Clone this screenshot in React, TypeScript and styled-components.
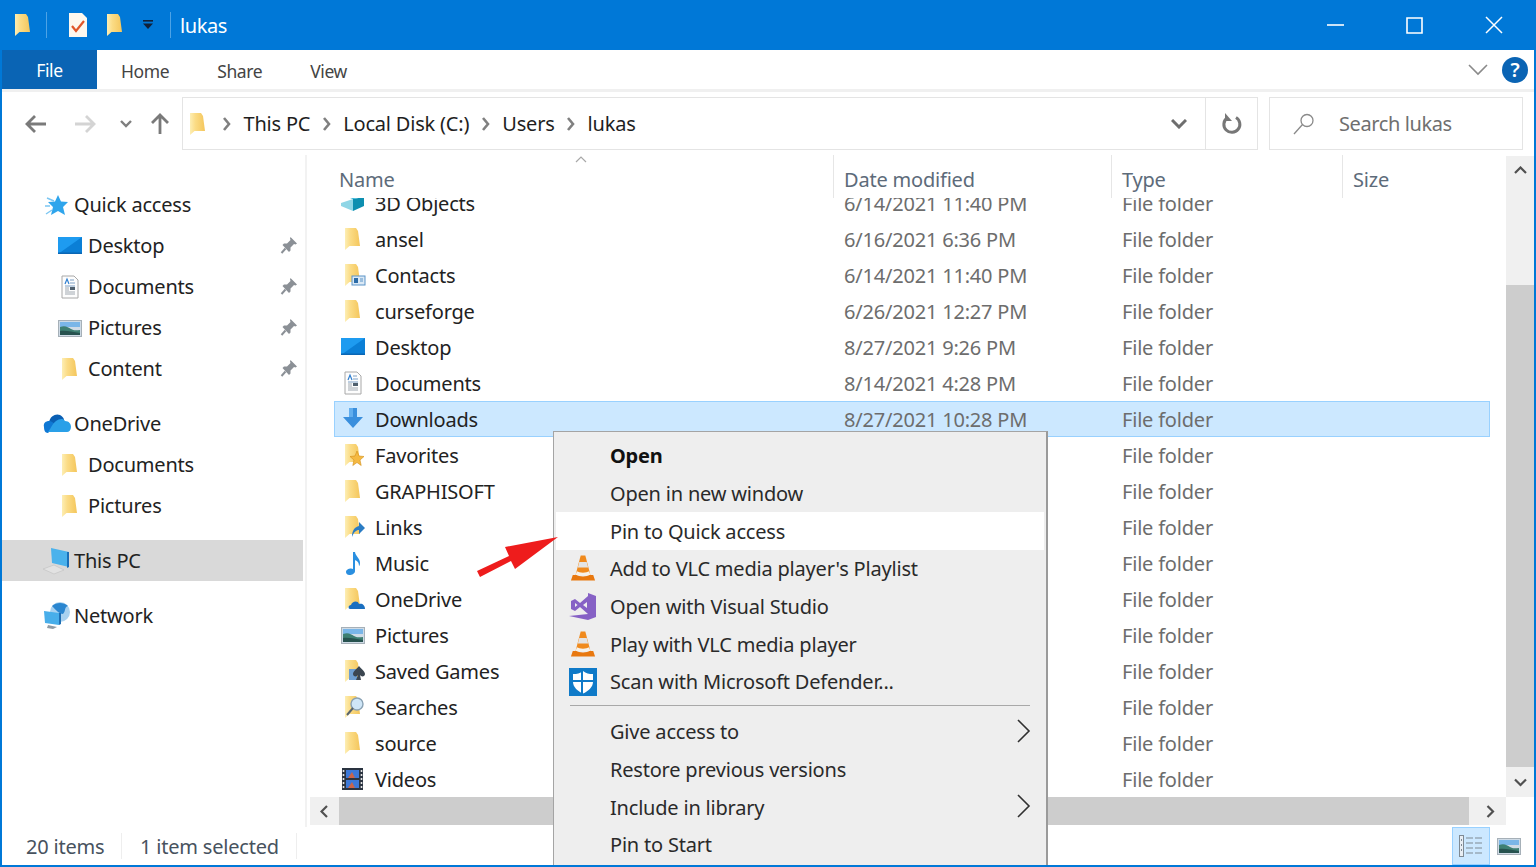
import React from "react";
import styled, { createGlobalStyle } from "styled-components";

const GlobalStyle = createGlobalStyle`
  html, body {
    margin: 0;
    padding: 0;
    overflow: hidden;
    background: #fff;
  }
  * { box-sizing: border-box; }
  svg { flex: none; }
`;

const FONT = `"Noto Sans", "Open Sans", sans-serif`;

/* ---------- icons ---------- */

const FolderIcon = ({ children }: { children?: React.ReactNode }) => (
  <svg width="26" height="24" viewBox="0 0 26 24">
    <defs>
      <linearGradient id="folderFill" x1="0" y1="0" x2="1" y2="0">
        <stop offset="0" stopColor="#fdeeb4" />
        <stop offset="0.35" stopColor="#fbdc86" />
        <stop offset="1" stopColor="#f4c65c" />
      </linearGradient>
    </defs>
    <path d="M5 1H16L18 4L20 19H9.5L5 23Z" fill="url(#folderFill)" />
    {children}
  </svg>
);

const DesktopIcon = () => (
  <svg width="26" height="24" viewBox="0 0 26 24">
    <rect x="1" y="3" width="24" height="17" fill="#1e9bf0" />
    <path d="M1 20L25 3V20Z" fill="#0b7fd6" />
    <rect x="1" y="18.5" width="24" height="1.5" fill="#0a66b4" />
  </svg>
);

const DocumentsIcon = () => (
  <svg width="26" height="24" viewBox="0 0 26 24">
    <path d="M5 1H17L21 5V23H5Z" fill="#fdfdfd" stroke="#a8a8a8" />
    <path d="M8 9l2-5 2 5" fill="none" stroke="#2f7fd0" strokeWidth="1.2" />
    <path d="M13 5h4M13 8h5M8 11h10" stroke="#7d9fc4" strokeWidth="1" />
    <rect x="13" y="12" width="5" height="3" fill="#50606e" />
    <path d="M8 13h4M8 15h4M8 17h10M8 19h10" stroke="#a0a8b0" strokeWidth="1" />
  </svg>
);

const PicturesIcon = () => (
  <svg width="26" height="24" viewBox="0 0 26 24">
    <rect x="1.5" y="4.5" width="23" height="16" fill="#cfdbe6" stroke="#a6b0b8" />
    <rect x="3" y="6" width="20" height="5" fill="#7ab6e8" />
    <path d="M3 11C8 9 11 11 14 13S20 14 23 14V19H3Z" fill="#3e7f72" />
    <path d="M3 15C9 14 15 16 23 17V19H3Z" fill="#27524f" />
  </svg>
);

const DownloadsIcon = () => (
  <svg width="26" height="24" viewBox="0 0 26 24">
    <path d="M9 1H17V10H23L13 21L3 10H9Z" fill="#3a8fdd" />
    <rect x="9" y="1" width="4" height="9" fill="#62aeee" />
  </svg>
);

const MusicIcon = () => (
  <svg width="26" height="24" viewBox="0 0 26 24">
    <path d="M13 1H15C15.5 5 20 7 20 12C20 13.5 19.5 15 19 15C19 11 17 10 15 9V20C15 22.5 12 24 9.5 24C7 24 6 22.5 6 21C6 19 8.5 17.5 11 17.5C11.8 17.5 12.5 17.7 13 18Z" fill="#2a8fe0" />
  </svg>
);

const VideosIcon = () => (
  <svg width="26" height="24" viewBox="0 0 26 24">
    <rect x="2" y="1" width="21" height="22" fill="#2a3340" />
    <rect x="6" y="3" width="13" height="8" fill="#3c78d8" />
    <rect x="6" y="13" width="13" height="8" fill="#3c78d8" />
    <path d="M8 11l4-6 3 6M8 21l4-6 3 6" fill="#c9654a" />
    <path d="M3.5 3v18M21.5 3v18" stroke="#e4e4e4" strokeWidth="1.6" strokeDasharray="2 2" />
  </svg>
);

const ObjectsIcon = () => (
  <svg width="26" height="24" viewBox="0 0 26 24">
    <path d="M1 12L13 8V20L1 15Z" fill="#8fd6e6" />
    <path d="M13 8L24 6V15L13 20Z" fill="#0d8fb0" />
    <path d="M4 0H24V6L13 8L4 5Z" fill="#2db2d8" />
  </svg>
);

const ContactsBadge = () => (
  <g>
    <rect x="12" y="13" width="13" height="9" fill="#dbe9f5" stroke="#5b93c7" />
    <rect x="14" y="15" width="4" height="5" fill="#2c6ca8" />
    <path d="M20 16h3M20 18h3" stroke="#5b93c7" />
  </g>
);
const FavoritesBadge = () => (
  <path d="M17 8l2 5 5 .5-4 3.5 1.2 5.5-4.2-3-4.2 3 1.2-5.5-4-3.5 5-.5Z" fill="#f5b942" stroke="#d18f1a" strokeWidth=".6" />
);
const LinksBadge = () => (
  <path d="M12 22C12 15 15 12 19 11V7L25 13L19 19V15C16 15 14 17 12 22Z" fill="#2a7cc4" />
);
const OneDriveBadge = () => (
  <path d="M10 22C8 22 8 18 11 18C12 14 18 13 19 17C22 16 25 18 25 22Z" fill="#1a6fc0" />
);
const GamesBadge = () => (
  <g>
    <rect x="9" y="10" width="8" height="11" fill="#6f9fd0" />
    <path d="M19 7C21 10 25 12 25 15S21 18 20 16L21 21H16L18 16C17 18 13 18 13 15S17 10 19 7Z" fill="#3b4650" />
  </g>
);
const SearchesBadge = () => (
  <g>
    <circle cx="17" cy="9" r="6" fill="#cfe6f7" stroke="#8aa2b4" strokeWidth="1.4" />
    <path d="M13 13L7 20" stroke="#59646c" strokeWidth="2" />
  </g>
);

const PinIcon = () => (
  <svg width="18" height="18" viewBox="0 0 18 18">
    <path d="M10.5 1L17 7.5L15.5 8.5L14 8L10.5 11.5L10.5 14.5L9 16L2.5 9L4 7.5H7L10.5 4L10 2.5Z" fill="#8b9096" />
    <path d="M5.5 12.5L1.5 17" stroke="#8b9096" strokeWidth="2" />
  </svg>
);

const StarIcon = () => (
  <svg width="26" height="26" viewBox="0 0 26 26">
    <path d="M14 3L17 9.5L24 10L19 15L21 23L14 19L7 23L9 15L4 10L11 9.5Z" fill="#2fa5ec" />
    <path d="M3 6L10 9M1 14L6 14M2 22L8 18" stroke="#7cc6f2" strokeWidth="1.4" />
  </svg>
);

const CloudIcon = () => (
  <svg width="30" height="22" viewBox="0 0 30 22">
    <path d="M7 9C8 3 14 0 18 2C20 3 22 5 22 7L7 14Z" fill="#0a5fb4" />
    <path d="M2 14C1 10 4 8 7 8C9 8 12 10 14 12L6 20C3 20 2 17 2 14Z" fill="#0f78d4" />
    <path d="M14 8C17 6 21 5 23 8C27 8 29 11 29 14C29 17 27 19 25 19H6C9 15 11 10 14 8Z" fill="#2aa0e8" />
  </svg>
);

const ThisPcIcon = () => (
  <svg width="30" height="28" viewBox="0 0 30 28">
    <path d="M9 1L27 5V20L10 16Z" fill="#4ab2ec" />
    <path d="M25 5L27 5V20L25 21Z" fill="#1a6fb8" />
    <path d="M1 22L12 18L22 23L12 27Z" fill="#e2e2e2" stroke="#bfbfbf" strokeWidth=".6" />
  </svg>
);

const NetworkIcon = () => (
  <svg width="28" height="28" viewBox="0 0 28 28">
    <circle cx="17" cy="10" r="10" fill="#a9d2f0" />
    <path d="M9 4C13 0 21 0 25 4C21 5 23 9 20 12C16 12 13 8 9 4Z" fill="#2a86d0" />
    <path d="M1 9L16 11V23L2 21Z" fill="#48aeea" />
    <path d="M16 11L18 11V22L16 23Z" fill="#1f6fb4" />
    <path d="M5 23L14 25L10 27L4 26Z" fill="#8f9ba5" />
  </svg>
);

const VlcIcon = () => (
  <svg width="26" height="29" viewBox="0 0 28 30">
    <path d="M11.5 1H16.5L22 22H6Z" fill="#f08a1d" />
    <path d="M10 8H18L19.5 14H8.5Z" fill="#e4e4e4" />
    <path d="M7.5 18C10 20 18 20 20.5 18L22 22H6Z" fill="#f7f2ea" />
    <path d="M3 22H7C9 24 19 24 21 22H25L27 28H1Z" fill="#e8780f" />
  </svg>
);

const VsIcon = () => (
  <svg width="30" height="30" viewBox="0 0 30 30">
    <path d="M20 1L28 4V25L20 28L1 24L20 22Z" fill="#8661c5" />
    <path d="M3 9L7 7L12 11L20 4V22L12 15L7 19L3 17ZM7 11V15L9.5 13ZM15 13L19 16V10Z" fill="#8661c5" fillRule="evenodd" />
  </svg>
);

const DefenderIcon = () => (
  <svg width="28" height="28" viewBox="0 0 28 28">
    <rect width="28" height="28" fill="#0f7ac8" />
    <path d="M14 3C17 5.5 20 6 24 6V14C24 19 19 23.5 14 25.5C9 23.5 4 19 4 14V6C8 6 11 5.5 14 3Z" fill="#fff" />
    <path d="M13 3V26M3 13H25" stroke="#0f7ac8" strokeWidth="2" />
  </svg>
);

type ChevronProps = {
  d: string;
  w: number;
  h: number;
  color?: string;
  stroke?: number;
};

const Line = ({ d, w, h, color = "#7a7a7a", stroke = 2 }: ChevronProps) => (
  <svg width={w} height={h} viewBox={`0 0 ${w} ${h}`}>
    <path d={d} fill="none" stroke={color} strokeWidth={stroke} />
  </svg>
);

const Crumb = () => <Line d="M2 2L7 8L2 14" w={10} h={16} color="#808080" stroke={2.6} />;
const SubmenuArrow = () => <Line d="M2 1L13 12L2 23" w={15} h={24} color="#303030" stroke={1.6} />;

const DetailsIcon = () => (
  <svg width="26" height="24" viewBox="0 0 26 24">
    <rect x="1.5" y="1.5" width="4" height="21" fill="#e8eef4" stroke="#7f8a94" />
    <path d="M3.5 5v2M3.5 10v2M3.5 15v2" stroke="#7f8a94" />
    <path d="M8 4h7M17 4h7M8 9h7M17 9h7M8 14h7M17 14h7M8 19h7M17 19h7" stroke="#7f8a94" strokeWidth="1.2" />
  </svg>
);

/* ---------- data ---------- */

type FileRow = { name: string; date?: string; icon: React.ReactNode };

const files: FileRow[] = [
  { name: "3D Objects", date: "6/14/2021 11:40 PM", icon: <ObjectsIcon /> },
  { name: "ansel", date: "6/16/2021 6:36 PM", icon: <FolderIcon /> },
  { name: "Contacts", date: "6/14/2021 11:40 PM", icon: <FolderIcon><ContactsBadge /></FolderIcon> },
  { name: "curseforge", date: "6/26/2021 12:27 PM", icon: <FolderIcon /> },
  { name: "Desktop", date: "8/27/2021 9:26 PM", icon: <DesktopIcon /> },
  { name: "Documents", date: "8/14/2021 4:28 PM", icon: <DocumentsIcon /> },
  { name: "Downloads", date: "8/27/2021 10:28 PM", icon: <DownloadsIcon /> },
  { name: "Favorites", icon: <FolderIcon><FavoritesBadge /></FolderIcon> },
  { name: "GRAPHISOFT", icon: <FolderIcon /> },
  { name: "Links", icon: <FolderIcon><LinksBadge /></FolderIcon> },
  { name: "Music", icon: <MusicIcon /> },
  { name: "OneDrive", icon: <FolderIcon><OneDriveBadge /></FolderIcon> },
  { name: "Pictures", icon: <PicturesIcon /> },
  { name: "Saved Games", icon: <FolderIcon><GamesBadge /></FolderIcon> },
  { name: "Searches", icon: <FolderIcon><SearchesBadge /></FolderIcon> },
  { name: "source", icon: <FolderIcon /> },
  { name: "Videos", icon: <VideosIcon /> },
];

type NavEntry = { label: string; icon: React.ReactNode; pinned?: boolean; child?: boolean; active?: boolean };

const navGroups: NavEntry[][] = [
  [
    { label: "Quick access", icon: <StarIcon /> },
    { label: "Desktop", icon: <DesktopIcon />, pinned: true, child: true },
    { label: "Documents", icon: <DocumentsIcon />, pinned: true, child: true },
    { label: "Pictures", icon: <PicturesIcon />, pinned: true, child: true },
    { label: "Content", icon: <FolderIcon />, pinned: true, child: true },
  ],
  [
    { label: "OneDrive", icon: <CloudIcon /> },
    { label: "Documents", icon: <FolderIcon />, child: true },
    { label: "Pictures", icon: <FolderIcon />, child: true },
  ],
  [{ label: "This PC", icon: <ThisPcIcon />, active: true }],
  [{ label: "Network", icon: <NetworkIcon /> }],
];

type MenuEntry = { label: string; icon?: React.ReactNode; bold?: boolean; hot?: boolean; sub?: boolean; split?: boolean };

const menuItems: MenuEntry[] = [
  { label: "Open", bold: true },
  { label: "Open in new window" },
  { label: "Pin to Quick access", hot: true },
  { label: "Add to VLC media player's Playlist", icon: <VlcIcon /> },
  { label: "Open with Visual Studio", icon: <VsIcon /> },
  { label: "Play with VLC media player", icon: <VlcIcon /> },
  { label: "Scan with Microsoft Defender...", icon: <DefenderIcon /> },
  { label: "Give access to", sub: true, split: true },
  { label: "Restore previous versions" },
  { label: "Include in library", sub: true },
  { label: "Pin to Start" },
];

const crumbs = ["This PC", "Local Disk (C:)", "Users", "lukas"];

/* ---------- page ---------- */

export default function App() {
  return (
    <Window>
      <GlobalStyle />
      <TitleBar>
        <QuickSlot $width={28}><FolderIcon /></QuickSlot>
        <TitleDivider $gap={9} />
        <QuickSlot $width={64}>
          <svg width="22" height="26" viewBox="0 0 22 26">
            <path d="M2 1H15L20 6V25H2Z" fill="#fdf8ef" />
            <path d="M5 14L9 19L17 9" fill="none" stroke="#e0562a" strokeWidth="2.2" />
          </svg>
        </QuickSlot>
        <QuickSlot $width={10}><FolderIcon /></QuickSlot>
        <QuickSlot $width={55}>
          <svg width="12" height="10" viewBox="0 0 12 10">
            <rect x="1" y="0" width="10" height="1.6" fill="#10213a" />
            <path d="M1 3.5H11L6 9Z" fill="#10213a" />
          </svg>
        </QuickSlot>
        <TitleDivider $gap={-5} />
        <WindowTitle>lukas</WindowTitle>
        <WindowControls>
          <WindowButton>
            <Line d="M0 8H17" w={17} h={16} color="#fff" stroke={1.6} />
          </WindowButton>
          <WindowButton>
            <Line d="M1 1H16V16H1Z" w={17} h={17} color="#fff" stroke={1.6} />
          </WindowButton>
          <WindowButton>
            <Line d="M1 1L17 17M17 1L1 17" w={18} h={18} color="#fff" stroke={1.5} />
          </WindowButton>
        </WindowControls>
      </TitleBar>

      <Ribbon>
        <FileTab>File</FileTab>
        <RibbonTab>Home</RibbonTab>
        <RibbonTab>Share</RibbonTab>
        <RibbonTab>View</RibbonTab>
        <RibbonRight>
          <Line d="M1 1L10 10L19 1" w={20} h={12} color="#8a8a8a" stroke={1.6} />
          <HelpBadge>?</HelpBadge>
        </RibbonRight>
      </Ribbon>

      <AddressRow>
        <NavButton $width={49}>
          <Line d="M10 2L2 10L10 18M2 10H21" w={22} h={20} color="#7a7a7a" stroke={2.8} />
        </NavButton>
        <NavButton $width={49}>
          <Line d="M12 2L20 10L12 18M20 10H1" w={22} h={20} color="#d4d4d4" stroke={2.8} />
        </NavButton>
        <NavButton $width={33}>
          <Line d="M1 1L6 6L11 1" w={12} h={8} color="#7f7f7f" stroke={2.4} />
        </NavButton>
        <NavButton $width={36}>
          <Line d="M2 10L10 2L18 10M10 2V21" w={20} h={22} color="#7a7a7a" stroke={2.8} />
        </NavButton>
        <AddressBox>
          <AddressPath>
            <AddressFolder><FolderIcon /></AddressFolder>
            {crumbs.map((crumb) => (
              <React.Fragment key={crumb}>
                <Crumb />
                <span>{crumb}</span>
              </React.Fragment>
            ))}
          </AddressPath>
          <AddressAction $width={53}>
            <Line d="M1 1L8 8L15 1" w={16} h={10} color="#6e6e6e" stroke={3} />
          </AddressAction>
          <AddressAction $width={52} $divided>
            <svg width="20" height="22" viewBox="0 0 20 22">
              <path d="M14 4.5A8 8 0 1 1 5 5" fill="none" stroke="#777" strokeWidth="3" />
              <path d="M3 0V8H10Z" fill="#777" />
            </svg>
          </AddressAction>
        </AddressBox>
        <SearchBox>
          <svg width="24" height="24" viewBox="0 0 24 24">
            <circle cx="15" cy="8.5" r="6" fill="none" stroke="#8a8a8a" strokeWidth="1.3" />
            <path d="M10.5 12.5L2 22" stroke="#8a8a8a" strokeWidth="1.3" />
          </svg>
          <SearchText>Search lukas</SearchText>
        </SearchBox>
      </AddressRow>

      <Main>
        <Sidebar>
          {navGroups.map((group, i) => (
            <NavGroup key={i}>
              {group.map((entry) => (
                <NavRow key={entry.label} $active={entry.active}>
                  <NavIcon $child={entry.child}>{entry.icon}</NavIcon>
                  <NavLabel $child={entry.child}>{entry.label}</NavLabel>
                  {entry.pinned && <PinSlot><PinIcon /></PinSlot>}
                </NavRow>
              ))}
            </NavGroup>
          ))}
        </Sidebar>

        <FileArea>
          <ListPane>
            <SortCaret>
              <Line d="M1 6L6 1L11 6" w={12} h={7} color="#a8a8a8" stroke={1.2} />
            </SortCaret>
            <HeaderRow>
              <HeaderCell>Name</HeaderCell>
              <HeaderCell $divided>Date modified</HeaderCell>
              <HeaderCell $divided>Type</HeaderCell>
              <HeaderCell $divided>Size</HeaderCell>
            </HeaderRow>
            <RowViewport>
              <RowList>
                {files.map((file) => (
                  <Row key={file.name} $selected={file.name === "Downloads"}>
                    <NameCell>
                      <RowIcon>{file.icon}</RowIcon>
                      {file.name}
                    </NameCell>
                    <MetaCell>{file.date}</MetaCell>
                    <MetaCell>File folder</MetaCell>
                    <MetaCell />
                  </Row>
                ))}
              </RowList>
            </RowViewport>
          </ListPane>

          <VScroll>
            <ScrollArrow $size={28}>
              <Line d="M1 7L6.5 1.5L12 7" w={13} h={9} color="#505050" stroke={2.2} />
            </ScrollArrow>
            <VTrackGap />
            <VThumb />
            <ScrollArrow $size={30}>
              <Line d="M1 1.5L6.5 7L12 1.5" w={13} h={9} color="#505050" stroke={2.2} />
            </ScrollArrow>
          </VScroll>

          <HScroll>
            <ScrollArrow $size={29}>
              <Line d="M7 1L1.5 6.5L7 12" w={9} h={13} color="#505050" stroke={2.2} />
            </ScrollArrow>
            <HThumb />
            <ScrollArrow $size={37} $inset={5}>
              <Line d="M1.5 1L7 6.5L1.5 12" w={9} h={13} color="#505050" stroke={2.2} />
            </ScrollArrow>
          </HScroll>
        </FileArea>
      </Main>

      <StatusBar>
        <StatusItem>20 items</StatusItem>
        <StatusItem $wide>1 item selected</StatusItem>
        <ViewButtons>
          <ViewButton $on><DetailsIcon /></ViewButton>
          <ViewButton><PicturesIcon /></ViewButton>
        </ViewButtons>
      </StatusBar>

      <ContextMenu>
        {menuItems.map((item) => (
          <React.Fragment key={item.label}>
            {item.split && <MenuSplit />}
            <MenuItem $hot={item.hot} $bold={item.bold}>
              <MenuIcon>{item.icon}</MenuIcon>
              {item.label}
              {item.sub && <MenuArrow><SubmenuArrow /></MenuArrow>}
            </MenuItem>
          </React.Fragment>
        ))}
      </ContextMenu>

      <Pointer width="90" height="50" viewBox="0 0 90 50">
        <path d="M6 41L38 26L34 17L87 7L44 39L40 31L9 47Z" fill="#ee1c1c" />
      </Pointer>
    </Window>
  );
}

const Window = styled.div`
  position: relative;
  display: flex;
  flex-direction: column;
  width: 1536px;
  height: 867px;
  overflow: hidden;
  background: #fff;
  border: 2px solid #0078d7;
  border-top: 0;
  font-family: ${FONT};
  font-size: 20px;
  letter-spacing: -0.2px;
  color: #222;
`;

const TitleBar = styled.div`
  display: flex;
  align-items: center;
  flex: 0 0 50px;
  padding-left: 7px;
  background: #0078d7;
  color: #fff;
`;

const QuickSlot = styled.div<{ $width: number }>`
  display: flex;
  justify-content: center;
  align-items: center;
  width: ${({ $width }) => $width}px;
`;

const TitleDivider = styled.div<{ $gap: number }>`
  width: 1px;
  height: 26px;
  margin: 0 -1px 0 ${({ $gap }) => $gap}px;
  background: #4da3e6;
`;

const WindowTitle = styled.div`
  margin-left: 10px;
  font-size: 20px;
  letter-spacing: -0.4px;
`;

const WindowControls = styled.div`
  display: flex;
  margin-left: auto;
  margin-right: 1px;
`;

const WindowButton = styled.div`
  display: flex;
  justify-content: center;
  align-items: center;
  width: 79px;
  height: 50px;
`;

const Ribbon = styled.div`
  display: flex;
  align-items: center;
  flex: 0 0 42px;
  border-bottom: 3px solid #f0f0f0;
  font-size: 17.5px;
  letter-spacing: -0.4px;
  color: #444;
`;

const FileTab = styled.div`
  display: flex;
  justify-content: center;
  align-items: center;
  align-self: stretch;
  width: 95px;
  background: #0a64b4;
  color: #fff;
`;

const RibbonTab = styled.div`
  padding: 2px 24px 0;
`;

const RibbonRight = styled.div`
  display: flex;
  align-items: center;
  gap: 14px;
  margin-left: auto;
  padding-right: 6px;
`;

const HelpBadge = styled.div`
  display: flex;
  justify-content: center;
  align-items: center;
  width: 26px;
  height: 26px;
  border-radius: 50%;
  background: #0a64b4;
  color: #fff;
  font-size: 20px;
  font-weight: 600;
`;

const AddressRow = styled.div`
  display: flex;
  flex: 0 0 63px;
  padding: 5px 11px 5px 9px;
`;

const NavButton = styled.div<{ $width: number }>`
  display: flex;
  justify-content: center;
  align-items: center;
  width: ${({ $width }) => $width}px;
`;

const AddressBox = styled.div`
  display: flex;
  flex: 1;
  margin-left: 4px;
  border: 1px solid #e4e4e4;
  background: #fff;
`;

const AddressPath = styled.div`
  display: flex;
  flex: 1;
  align-items: center;
  gap: 11.5px;
  padding-left: 2px;
  font-size: 20px;
  color: #1e1e1e;
`;

const AddressFolder = styled.div`
  display: flex;
  margin-right: -0.5px;
`;

const AddressAction = styled.div<{ $width: number; $divided?: boolean }>`
  display: flex;
  justify-content: center;
  align-items: center;
  width: ${({ $width }) => $width}px;
  border-left: ${({ $divided }) => ($divided ? "1px solid #e4e4e4" : "0")};
`;

const SearchBox = styled.div`
  display: flex;
  align-items: center;
  gap: 23px;
  width: 254px;
  margin-left: 11px;
  padding-left: 22px;
  border: 1px solid #e4e4e4;
  letter-spacing: -0.4px;
`;

const SearchText = styled.span`
  color: #6f6f6f;
`;

const Main = styled.div`
  display: flex;
  flex: 1;
  min-height: 0;
`;

const Sidebar = styled.nav`
  display: flex;
  flex-direction: column;
  gap: 14px;
  width: 305px;
  padding: 29px 2px 0 0;
  border-right: 2px solid #f2f2f2;
`;

const NavGroup = styled.div`
  display: flex;
  flex-direction: column;
`;

const NavRow = styled.div<{ $active?: boolean }>`
  display: flex;
  align-items: center;
  height: 41px;
  background: ${({ $active }) => ($active ? "#d9d9d9" : "transparent")};
`;

const NavIcon = styled.div<{ $child?: boolean }>`
  display: flex;
  justify-content: center;
  width: 30px;
  margin-left: ${({ $child }) => ($child ? 53 : 40)}px;
`;

const NavLabel = styled.span<{ $child?: boolean }>`
  margin-left: ${({ $child }) => ($child ? 3 : 2)}px;
`;

const PinSlot = styled.div`
  display: flex;
  margin: 0 5px 2px auto;
`;

const FileArea = styled.div`
  display: grid;
  flex: 1;
  grid-template-columns: 1fr 28px;
  grid-template-rows: 642px 28px;
  min-width: 0;
`;

const ListPane = styled.div`
  position: relative;
  display: flex;
  flex-direction: column;
  min-height: 0;
`;

const SortCaret = styled.div`
  position: absolute;
  top: 1px;
  left: 268px;
  display: flex;
`;

const HeaderRow = styled.div`
  display: grid;
  flex: 0 0 43px;
  grid-template-columns: 526px 278px 231px 155px;
  align-items: stretch;
  color: #5d6b7a;
`;

const HeaderCell = styled.div<{ $divided?: boolean }>`
  display: flex;
  align-items: center;
  padding: 5px 0 0 ${({ $divided }) => ($divided ? 10 : 32)}px;
  border-left: ${({ $divided }) => ($divided ? "1px solid #e6e6e6" : "0")};
`;

const RowViewport = styled.div`
  flex: 1;
  overflow: hidden;
`;

const RowList = styled.div`
  margin: -13px 16px 0 27px;
`;

const Row = styled.div<{ $selected?: boolean }>`
  display: grid;
  grid-template-columns: 499px 278px 231px 1fr;
  align-items: center;
  height: 36px;
  background: ${({ $selected }) => ($selected ? "#cce8ff" : "transparent")};
  box-shadow: ${({ $selected }) => ($selected ? "inset 0 0 0 1px #99d1ff" : "none")};
`;

const NameCell = styled.div`
  display: flex;
  align-items: center;
  color: #222;
`;

const RowIcon = styled.div`
  display: flex;
  justify-content: center;
  width: 26px;
  margin: 0 9px 0 6px;
`;

const MetaCell = styled.div`
  padding-left: 11px;
  color: #6d6d6d;
`;

const VScroll = styled.div`
  display: flex;
  flex-direction: column;
  margin-top: 1px;
  background: #f0f0f0;
`;

const ScrollArrow = styled.div<{ $size: number; $inset?: number }>`
  display: flex;
  justify-content: center;
  align-items: center;
  flex: 0 0 ${({ $size }) => $size}px;
  padding-left: ${({ $inset }) => $inset ?? 0}px;
`;

const VTrackGap = styled.div`
  flex: 0 0 101px;
`;

const VThumb = styled.div`
  flex: 1;
  background: #cdcdcd;
`;

const HScroll = styled.div`
  display: flex;
  margin-left: 3px;
  background: #f0f0f0;
`;

const HThumb = styled.div`
  flex: 1;
  background: #cdcdcd;
`;

const StatusBar = styled.div`
  display: flex;
  align-items: center;
  flex: 0 0 37px;
  color: #47525e;
`;

const StatusItem = styled.div<{ $wide?: boolean }>`
  display: flex;
  align-items: center;
  width: ${({ $wide }) => ($wide ? 175 : 120)}px;
  height: 26px;
  padding-left: ${({ $wide }) => ($wide ? 18 : 24)}px;
  border-right: 1px solid #eeeeee;
`;

const ViewButtons = styled.div`
  display: flex;
  gap: 3px;
  margin-left: auto;
  margin-right: 9px;
`;

const ViewButton = styled.div<{ $on?: boolean }>`
  display: flex;
  justify-content: center;
  align-items: center;
  width: ${({ $on }) => ($on ? 38 : 32)}px;
  height: 38px;
  background: ${({ $on }) => ($on ? "#cce8ff" : "transparent")};
  border: ${({ $on }) => ($on ? "1px solid #99d1ff" : "0")};
`;

const ContextMenu = styled.div`
  position: absolute;
  top: 431px;
  left: 551px;
  width: 495px;
  height: 440px;
  padding: 5px 2px;
  background: #eeeeee;
  border: 1px solid #a4a4a4;
  border-right: 2px solid #9a9a9a;
  color: #2a2a2a;
`;

const MenuItem = styled.div<{ $hot?: boolean; $bold?: boolean }>`
  display: flex;
  align-items: center;
  height: 37.7px;
  font-weight: ${({ $bold }) => ($bold ? 700 : 400)};
  color: ${({ $bold }) => ($bold ? "#111" : "inherit")};
  background: ${({ $hot }) => ($hot ? "#fff" : "transparent")};
`;

const MenuIcon = styled.div`
  display: flex;
  justify-content: center;
  width: 54px;
  padding-right: 1px;
`;

const MenuArrow = styled.div`
  display: flex;
  margin: 0 13px 2px auto;
`;

const MenuSplit = styled.div`
  height: 1px;
  margin: 4px 14px 7px 14px;
  background: #a8a8a8;
`;

const Pointer = styled.svg`
  position: absolute;
  top: 530px;
  left: 469px;
`;
